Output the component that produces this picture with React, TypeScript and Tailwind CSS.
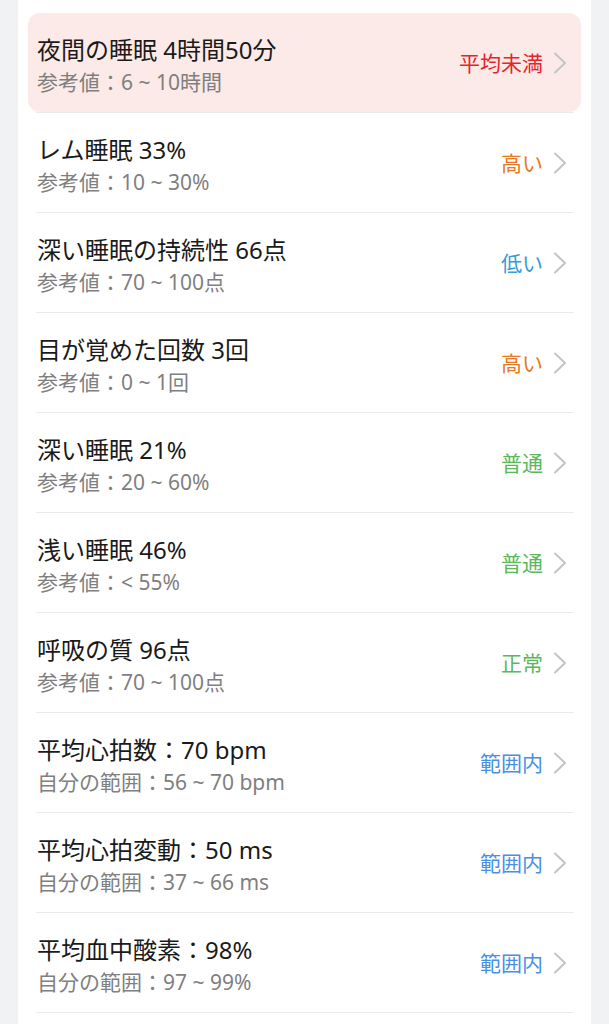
import React from "react";

type Row = { title: string; sub: string; status: string; color: string; highlight?: boolean };

const rows: Row[] = [
  { title: "夜間の睡眠 4時間50分", sub: "参考値：6 ~ 10時間", status: "平均未満", color: "text-[#e5242b]", highlight: true },
  { title: "レム睡眠 33%", sub: "参考値：10 ~ 30%", status: "高い", color: "text-[#e87722]" },
  { title: "深い睡眠の持続性 66点", sub: "参考値：70 ~ 100点", status: "低い", color: "text-[#3a9bd5]" },
  { title: "目が覚めた回数 3回", sub: "参考値：0 ~ 1回", status: "高い", color: "text-[#e87722]" },
  { title: "深い睡眠 21%", sub: "参考値：20 ~ 60%", status: "普通", color: "text-[#5cb85c]" },
  { title: "浅い睡眠 46%", sub: "参考値：< 55%", status: "普通", color: "text-[#5cb85c]" },
  { title: "呼吸の質 96点", sub: "参考値：70 ~ 100点", status: "正常", color: "text-[#5cb85c]" },
  { title: "平均心拍数：70 bpm", sub: "自分の範囲：56 ~ 70 bpm", status: "範囲内", color: "text-[#4a90e2]" },
  { title: "平均心拍変動：50 ms", sub: "自分の範囲：37 ~ 66 ms", status: "範囲内", color: "text-[#4a90e2]" },
  { title: "平均血中酸素：98%", sub: "自分の範囲：97 ~ 99%", status: "範囲内", color: "text-[#4a90e2]" },
];

function Chevron() {
  return (
    <svg width="14" height="22" viewBox="0 0 14 22" className="shrink-0">
      <path d="M2 1.5 L12 11 L2 20.5" fill="none" stroke="#c4c4c4" strokeWidth="2" strokeLinecap="round" strokeLinejoin="round" />
    </svg>
  );
}

export default function App() {
  return (
    <div
      className="w-[609px] h-[1024px] overflow-hidden bg-[#f1f2f4]"
      style={{ fontFamily: '"Noto Sans", "Noto Sans CJK JP", sans-serif' }}
    >
      <div className="ml-[18px] w-[573px] h-[1024px] bg-white pt-[13px]">
        {rows.map((r, i) => (
          <div key={i} className="flex flex-col">
            <div
              className={`h-[99px] flex items-center justify-between ${
                r.highlight ? "mx-[10px] pl-[9px] pr-[14px] rounded-[12px] bg-[#fbeae7]" : "pl-[19px] pr-[24px]"
              }`}
            >
              <div className="self-start pt-[21px] flex flex-col">
                <div className="text-[24px] leading-[32px] text-[#1a1a1a] whitespace-nowrap">{r.title}</div>
                <div className="text-[21px] leading-[32px] text-[#7f7f7f] whitespace-nowrap">{r.sub}</div>
              </div>
              <div className="flex items-center gap-[10px]">
                <span className={`text-[21px] leading-[28px] ${r.color}`}>{r.status}</span>
                <Chevron />
              </div>
            </div>
            <div className="h-px ml-[18px] mr-[17px] bg-[#ebebeb]" />
          </div>
        ))}
      </div>
    </div>
  );
}
